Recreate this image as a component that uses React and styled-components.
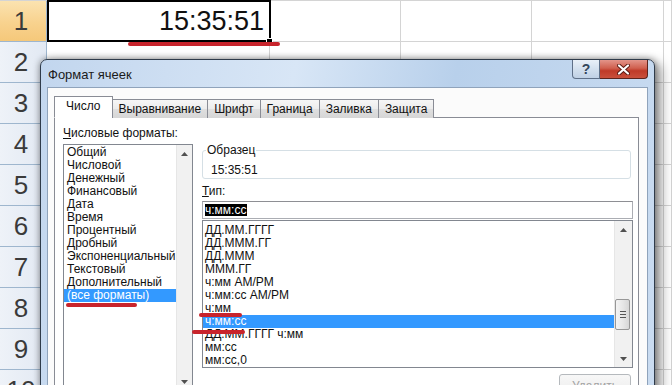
import React from "react"
import styled, { createGlobalStyle } from "styled-components"

const GlobalStyle = createGlobalStyle`
  html, body {
    margin: 0;
    padding: 0;
  }
  body {
    width: 672px;
    height: 385px;
    overflow: hidden;
    background: #fff;
    font-family: "Liberation Sans", Arial, sans-serif;
  }
`

const Screen = styled.div`
  position: relative;
  width: 672px;
  height: 385px;
  overflow: hidden;
`

// ---- spreadsheet behind the dialog ----

const Sheet = styled.div`
  display: grid;
  grid-template-columns: 47px 223px 131px 131px 132px 1fr;
  grid-auto-rows: 41px;
  border-top: 1px solid #d4d4d4;
`

const RowHead = styled.div`
  box-sizing: border-box;
  display: flex;
  align-items: center;
  justify-content: center;
  padding-right: 4px;
  border-right: 1px solid #9eb6ce;
  border-bottom: 1px solid #9eb6ce;
  background: ${p => p.$active
    ? "linear-gradient(180deg, #fbe3b0 0%, #f8d28e 55%, #f5c87a 100%)"
    : "linear-gradient(90deg, #eef2f8 0%, #e2e9f3 100%)"};
  color: #3a3a3a;
  font-size: 26px;
`

const Cell = styled.div`
  box-sizing: border-box;
  border-right: 1px solid #d4d4d4;
  border-bottom: 1px solid #d4d4d4;
`

const ActiveCell = styled(Cell)`
  position: relative;
  display: flex;
  align-items: center;
  justify-content: flex-end;
  padding-right: 5px;
  font-size: 27px;
  color: #111;

  &::before {
    content: "";
    position: absolute;
    inset: -1px -2px -1px 0;
    border: 2px solid #000;
  }

  &::after {
    content: "";
    position: absolute;
    right: -4px;
    bottom: -4px;
    width: 5px;
    height: 5px;
    background: #000;
    border: 1px solid #fff;
  }
`

// ---- dialog window ----

const Dialog = styled.div`
  position: absolute;
  left: 40px;
  top: 59px;
  width: 615px;
  height: 345px;
  box-sizing: border-box;
  display: flex;
  flex-direction: column;
  border: 1px solid #2f3b4a;
  border-radius: 7px 7px 0 0;
  background: linear-gradient(100deg, #c2d6ee 0%, #d8e6f6 38%, #b8d0eb 62%, #cadcf1 100%);
  box-shadow: 0 0 7px rgba(0, 0, 0, 0.45), 7px 4px 12px rgba(0, 0, 0, 0.35);
  font-family: "Liberation Sans", Arial, sans-serif;
  font-size: 12px;
  color: #000;
`

const TitleBar = styled.div`
  display: flex;
  align-items: flex-start;
  height: 27px;
`

const Title = styled.div`
  padding: 7px 0 0 7px;
  font-size: 13px;
  line-height: 15px;
  color: #1b1b1b;
`

const Controls = styled.div`
  display: flex;
  margin-left: auto;
  margin-right: 6px;
`

const HelpButton = styled.div`
  box-sizing: border-box;
  width: 28px;
  height: 19px;
  display: flex;
  align-items: center;
  justify-content: center;
  border: 1px solid #5f7088;
  border-top: none;
  border-radius: 0 0 0 4px;
  background: linear-gradient(180deg, #e9f0f8 0%, #d3e0ee 50%, #c0d1e5 100%);
  color: #34465c;
  font-size: 14px;
  font-weight: bold;
`

const CloseButton = styled.div`
  box-sizing: border-box;
  width: 48px;
  height: 19px;
  display: flex;
  align-items: center;
  justify-content: center;
  border: 1px solid #5c241d;
  border-top: none;
  border-left: none;
  border-radius: 0 0 4px 0;
  background: linear-gradient(180deg, #e3958a 0%, #d0604f 45%, #bf3a28 60%, #c9503c 100%);
`

const Panel = styled.div`
  flex: 1;
  display: flex;
  flex-direction: column;
  margin: 0 6px;
  padding: 8px 8px 0 6px;
  border: 1px solid #8fa3bb;
  border-bottom: none;
  background: #fbfbfb;
`

const TabRow = styled.div`
  display: flex;
  align-items: flex-end;
  height: 22px;
  margin: 0 0 -1px 1px;
  position: relative;
  z-index: 1;
`

const Tab = styled.div`
  box-sizing: border-box;
  height: ${p => (p.$active ? "22px" : "19px")};
  display: flex;
  align-items: center;
  padding: ${p => (p.$active ? "0 11px 2px" : "0 6px")};
  margin-left: -1px;
  border: 1px solid #898c95;
  border-bottom: ${p => (p.$active ? "1px solid #fff" : "none")};
  background: ${p => p.$active
    ? "#fff"
    : "linear-gradient(180deg, #f6f6f6 0%, #ececec 50%, #dfdfdf 51%, #d6d6d6 100%)"};
  color: #111;
  white-space: nowrap;
`

const TabPage = styled.div`
  flex: 1;
  display: grid;
  grid-template-columns: 130px 1fr;
  column-gap: 9px;
  align-items: start;
  padding: 8px 5px 0 8px;
  border: 1px solid #898c95;
  border-bottom: none;
  background: #fff;
`

const Column = styled.div`
  display: flex;
  flex-direction: column;
`

const Label = styled.div`
  line-height: 14px;
  margin-top: ${p => p.$gap || 0}px;
  color: #111;
`

const ListBox = styled.div`
  display: flex;
  height: ${p => p.$height}px;
  margin-top: ${p => p.$gap}px;
  box-sizing: border-box;
  border: 1px solid #828790;
  background: #fff;
`

const Items = styled.div`
  flex: 1;
  padding-top: ${p => p.$pad}px;
`

const Item = styled.div`
  height: 13px;
  line-height: 13px;
  padding-left: ${p => p.$indent}px;
  white-space: nowrap;
  background: ${p => (p.$selected ? "#3399ff" : "transparent")};
  color: ${p => (p.$selected ? "#fff" : "#111")};
`

const ScrollBar = styled.div`
  width: 17px;
  display: flex;
  flex-direction: column;
  background: #f1f1f1;
  border-left: 1px solid #e6e6e6;
`

const ArrowButton = styled.div`
  height: 17px;
  display: flex;
  align-items: center;
  justify-content: center;
`

const Track = styled.div`
  flex: 1;
  padding-top: ${p => p.$offset || 0}px;
`

const Thumb = styled.div`
  box-sizing: border-box;
  width: 15px;
  height: 31px;
  display: flex;
  flex-direction: column;
  align-items: center;
  justify-content: center;
  gap: 2px;
  border: 1px solid #979797;
  border-radius: 2px;
  background: linear-gradient(90deg, #f4f4f4 0%, #e6e6e6 55%, #d6d6d6 100%);
`

const Grip = styled.div`
  width: 6px;
  height: 1px;
  background: #555;
`

const GroupBox = styled.fieldset`
  margin: 17px 2px 0 0;
  padding: 6px 8px 1px 8px;
  border: 1px solid #d5dfe5;
  border-radius: 3px;
  min-width: 0;
`

const Legend = styled.legend`
  margin-left: -5px;
  padding: 0 1px;
  line-height: 14px;
  color: #111;
`

const SampleValue = styled.div`
  line-height: 14px;
  color: #111;
`

const TypeInput = styled.div`
  box-sizing: border-box;
  height: 18px;
  margin-top: 3px;
  display: flex;
  align-items: center;
  padding: 0 2px;
  border: 1px solid #abadb3;
  border-top-color: #8e8f94;
  background: #fff;
`

const Selection = styled.span`
  background: #000;
  color: #fff;
  line-height: 12px;
  padding: 0 1px 0 0;
`

const ButtonRow = styled.div`
  display: flex;
  justify-content: flex-end;
  margin-top: 6px;
  padding-right: 2px;
`

const DisabledButton = styled.div`
  box-sizing: border-box;
  width: 72px;
  height: 23px;
  display: flex;
  align-items: center;
  justify-content: center;
  border: 1px solid #b5b9bd;
  border-radius: 3px;
  background: linear-gradient(180deg, #f7f7f7, #ececec);
  color: #a3a3a3;
`

// red annotation strokes drawn over the screenshot
const Mark = styled.div`
  position: absolute;
  left: ${p => p.$x}px;
  top: ${p => p.$y}px;
  width: ${p => p.$w}px;
  height: 4px;
  border-radius: 2px;
  background: #c8242c;
  z-index: 5;
`

const Arrow = ({ down }) => (
  <svg width="7" height="4" viewBox="0 0 7 4">
    <path d={down ? "M0 0 L7 0 L3.5 4 Z" : "M0 4 L7 4 L3.5 0 Z"} fill="#505050" />
  </svg>
)

const CloseGlyph = () => (
  <svg width="13" height="11" viewBox="0 0 13 11">
    <path d="M2 1.5 L11 9.5 M11 1.5 L2 9.5" stroke="#5a1a12" strokeWidth="4" strokeLinecap="round" />
    <path d="M2 1.5 L11 9.5 M11 1.5 L2 9.5" stroke="#fff" strokeWidth="2.2" strokeLinecap="round" />
  </svg>
)

const categories = [
  "Общий", "Числовой", "Денежный", "Финансовый", "Дата", "Время",
  "Процентный", "Дробный", "Экспоненциальный", "Текстовый",
  "Дополнительный", "(все форматы)",
]

const formats = [
  "ДД.ММ.ГГГГ", "ДД.МММ.ГГ", "ДД.МММ", "МММ.ГГ", "ч:мм AM/PM",
  "ч:мм:сс AM/PM", "ч:мм", "ч:мм:сс", "ДД.ММ.ГГГГ ч:мм", "мм:сс", "мм:сс,0",
]

const tabs = ["Число", "Выравнивание", "Шрифт", "Граница", "Заливка", "Защита"]

const rows = [1, 2, 3, 4, 5, 6, 7, 8, 9, 10]

export default function App() {
  return (
    <Screen>
      <GlobalStyle />
      <Sheet>
        {rows.map(r => (
          <React.Fragment key={r}>
            <RowHead $active={r === 1}>{r}</RowHead>
            {r === 1 ? <ActiveCell>15:35:51</ActiveCell> : <Cell />}
            <Cell />
            <Cell />
            <Cell />
            <Cell />
          </React.Fragment>
        ))}
      </Sheet>

      <Dialog>
        <TitleBar>
          <Title>Формат ячеек</Title>
          <Controls>
            <HelpButton>?</HelpButton>
            <CloseButton><CloseGlyph /></CloseButton>
          </Controls>
        </TitleBar>
        <Panel>
          <TabRow>
            {tabs.map((t, i) => (
              <Tab key={t} $active={i === 0}>{t}</Tab>
            ))}
          </TabRow>
          <TabPage>
            <Column>
              <Label><u>Ч</u>исловые форматы:</Label>
              <ListBox $height={247} $gap={4}>
                <Items $pad={1}>
                  {categories.map((c, i) => (
                    <Item key={c} $indent={3} $selected={i === categories.length - 1}>{c}</Item>
                  ))}
                </Items>
                <ScrollBar>
                  <ArrowButton><Arrow /></ArrowButton>
                  <Track />
                  <ArrowButton><Arrow down /></ArrowButton>
                </ScrollBar>
              </ListBox>
            </Column>
            <Column>
              <GroupBox>
                <Legend>Образец</Legend>
                <SampleValue>15:35:51</SampleValue>
              </GroupBox>
              <Label $gap={5}><u>Т</u>ип:</Label>
              <TypeInput><Selection>ч:мм:сс</Selection></TypeInput>
              <ListBox $height={148} $gap={1}>
                <Items $pad={3}>
                  {formats.map((f, i) => (
                    <Item key={f} $indent={2} $selected={i === 7}>{f}</Item>
                  ))}
                </Items>
                <ScrollBar>
                  <ArrowButton><Arrow /></ArrowButton>
                  <Track $offset={61}>
                    <Thumb>
                      <Grip />
                      <Grip />
                      <Grip />
                    </Thumb>
                  </Track>
                  <ArrowButton><Arrow down /></ArrowButton>
                </ScrollBar>
              </ListBox>
              <ButtonRow>
                <DisabledButton>Удалить</DisabledButton>
              </ButtonRow>
            </Column>
          </TabPage>
        </Panel>
      </Dialog>

      <Mark $x={128} $y={42} $w={152} />
      <Mark $x={66} $y={303} $w={71} />
      <Mark $x={199} $y={313} $w={43} />
      <Mark $x={192} $y={330} $w={53} />
    </Screen>
  )
}
